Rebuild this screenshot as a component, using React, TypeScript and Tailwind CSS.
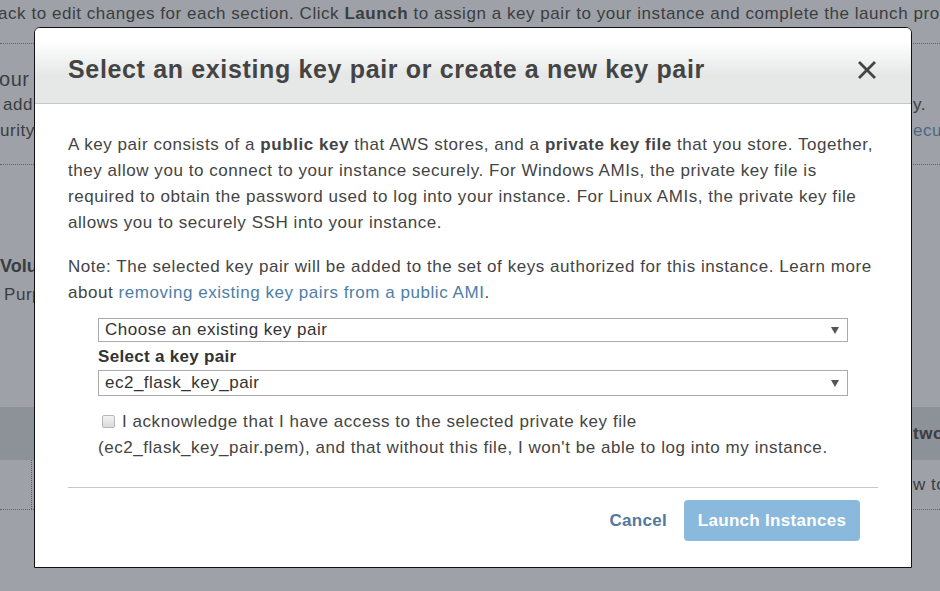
import React from "react";

const dotted = "border-dotted border-[#5f6369]";

function SelectBox({ value, height }: { value: string; height: string }) {
  return (
    <div className={`flex ${height} w-[750px] items-center justify-between border border-[#a9abad] bg-white pl-[6px] pr-[8px]`}>
      <span className="text-[17px] tracking-[0.5px] text-[#333]">{value}</span>
      <svg width="8" height="7" viewBox="0 0 8 7" className="text-[#555]">
        <path d="M0 0 H8 L4 7 Z" fill="currentColor" />
      </svg>
    </div>
  );
}

function Backdrop() {
  return (
    <div className="flex flex-col text-[17px] tracking-[0.55px] text-[#3b3d41] whitespace-nowrap">
      <div className="-ml-[2px] flex h-[28px] items-center">
        ack to edit changes for each section. Click&nbsp;<b>Launch</b>&nbsp;to assign a key pair to your instance and complete the launch process.
      </div>
      <div className={`h-[16px] border-b ${dotted}`} />
      <div className={`flex flex-col pt-[22px] pb-[20px] border-b ${dotted}`}>
        <div className="flex h-[26px] items-center">
          <span className="w-[34px] overflow-hidden text-[20px] -ml-[1px]">our s</span>
        </div>
        <div className="flex h-[26px] items-center justify-between">
          <span className="w-[34px] overflow-hidden pl-[3px]">add</span>
          <span className="w-[27px] overflow-hidden">y.</span>
        </div>
        <div className="flex h-[26px] items-center justify-between">
          <span className="w-[34px] overflow-hidden">urity</span>
          <span className="w-[27px] overflow-hidden text-[#4a6784]">ecu</span>
        </div>
      </div>
      <div className="flex flex-col pt-[88px]">
        <div className="flex h-[26px] items-center">
          <span className="w-[34px] overflow-hidden text-[18px] font-bold tracking-normal">Volu</span>
        </div>
        <div className="flex h-[26px] items-center pt-[6px]">
          <span className="w-[34px] overflow-hidden pl-[4px]">Purp</span>
        </div>
      </div>
      <div className="mt-[102px] flex h-[53px] items-center justify-end bg-[#8d9198]">
        <span className="w-[27px] overflow-hidden font-bold">two</span>
      </div>
      <div className={`flex h-[50px] items-center justify-between border-b ${dotted}`}>
        <div className={`h-full w-[32px] border-r ${dotted}`} />
        <span className="w-[27px] overflow-hidden">w to</span>
      </div>
    </div>
  );
}

export default function App() {
  return (
    <div className="relative h-[591px] w-full overflow-hidden bg-[#9ea2a8] font-['Liberation_Sans',Arial,sans-serif]">
      <Backdrop />

      <div className="absolute left-[34px] top-[27px] flex h-[541px] w-[878px] flex-col overflow-hidden rounded-t-[6px] border border-[#111] bg-white">
        <div className="flex h-[76px] shrink-0 items-center justify-between border-b border-[#c6c7c8] bg-[linear-gradient(to_bottom,#ffffff_18%,#e6e8e8_62%)] pl-[33px] pr-[35px] pt-[9px]">
          <h1 className="text-[25px] font-bold tracking-[0.65px] text-[#444]">Select an existing key pair or create a new key pair</h1>
          <svg width="18" height="18" viewBox="0 0 18 18" className="text-[#444]">
            <path d="M2 2 L16 16 M16 2 L2 16" stroke="currentColor" strokeWidth="2.8" strokeLinecap="square" />
          </svg>
        </div>

        <div className="flex flex-col px-[33px] pt-[28px] text-[17px] leading-[26px] tracking-[0.55px] text-[#444]">
          <p className="whitespace-nowrap">
            A key pair consists of a <b>public key</b> that AWS stores, and a <b>private key file</b> that you store. Together,
            <br />
            they allow you to connect to your instance securely. For Windows AMIs, the private key file is
            <br />
            required to obtain the password used to log into your instance. For Linux AMIs, the private key file
            <br />
            allows you to securely SSH into your instance.
          </p>
          <p className="mt-[18px] whitespace-nowrap">
            Note: The selected key pair will be added to the set of keys authorized for this instance. Learn more
            <br />
            about <span className="text-[#4d7ea8]">removing existing key pairs from a public AMI</span>.
          </p>

          <div className="ml-[30px] flex flex-col">
            <div className="mt-[12px]">
              <SelectBox value="Choose an existing key pair" height="h-[24px]" />
            </div>
            <label className="mt-[5px] text-[17px] font-bold leading-[20px] tracking-[0.3px] text-[#333]">Select a key pair</label>
            <div className="mt-[3px]">
              <SelectBox value="ec2_flask_key_pair" height="h-[26px]" />
            </div>
            <p className="mt-[13px] whitespace-nowrap">
              <span className="mb-[-1px] ml-[4px] mr-[7px] inline-block h-[13px] w-[13px] rounded-[2px] border border-[#b4b6b8] bg-[linear-gradient(to_bottom,#f2f2f2,#d9dadb)]" />
              I acknowledge that I have access to the selected private key file
              <br />
              (ec2_flask_key_pair.pem), and that without this file, I won't be able to log into my instance.
            </p>
          </div>

          <div className="mt-[26px] border-t border-[#c8c8c8]" />

          <div className="mt-[12px] flex items-center justify-end gap-[17px] pr-[18px]">
            <button className="text-[17px] font-bold tracking-[0.3px] text-[#52799c]">Cancel</button>
            <button className="h-[41px] w-[176px] rounded-[4px] bg-[#89b9dd] text-[17px] font-bold tracking-[0.3px] text-white">
              Launch Instances
            </button>
          </div>
        </div>
      </div>
    </div>
  );
}
